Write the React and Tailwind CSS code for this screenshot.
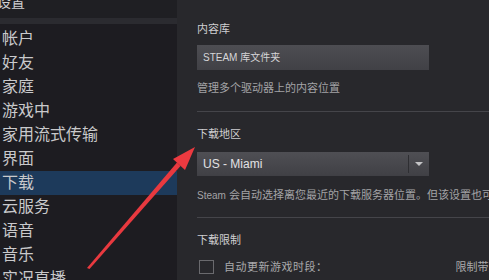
import React from "react";

const font = { fontFamily: '"Liberation Sans", "Noto Sans CJK SC", sans-serif' };

const menu = [
  "帐户",
  "好友",
  "家庭",
  "游戏中",
  "家用流式传输",
  "界面",
  "下载",
  "云服务",
  "语音",
  "音乐",
  "实况直播",
];

function Sidebar() {
  return (
    <div className="w-[177px] shrink-0 bg-[#1d1c21] border-t-[6px] border-[#2b2b30] pt-[3px]">
      {menu.map((item) => (
        <div
          key={item}
          className={
            "h-[24px] flex items-center pl-[2px] text-[16px] leading-none text-[#c9c9cb] " +
            (item === "下载" ? "bg-[#1d3a5b]" : "")
          }
        >
          {item}
        </div>
      ))}
    </div>
  );
}

function Divider() {
  return <div className="h-px bg-[#45454a] w-full" />;
}

function Content() {
  return (
    <div className="flex-1 bg-[#28282c] pl-[20px] -mt-[18px] flex flex-col text-[11px] leading-[16px]">
      <div className="mt-[21px] h-[16px] text-[#cfcfd1]">内容库</div>
      <div className="mt-[8px] w-[232px] h-[25px] bg-gradient-to-b from-[#4d4d52] to-[#414146] flex items-center pl-[6px] text-[10px] text-[#d6d6d8]">
        STEAM 库文件夹
      </div>
      <div className="mt-[10px] h-[16px] text-[#a3a3a6]">管理多个驱动器上的内容位置</div>
      <div className="mt-[15px]">
        <Divider />
      </div>
      <div className="mt-[14px] h-[16px] text-[#cfcfd1]">下载地区</div>
      <div className="mt-[10px] w-[232px] h-[24px] bg-gradient-to-b from-[#4f4f54] to-[#404045] flex items-center text-[12px] text-[#e2e2e4]">
        <div className="flex-1 pl-[6px]">US - Miami</div>
        <div className="w-px h-[18px] bg-[#2e2e32]" />
        <div className="w-[20px] flex items-center justify-center">
          <div className="w-0 h-0 border-l-[4px] border-r-[4px] border-t-[4px] border-l-transparent border-r-transparent border-t-[#c4c4c6]" />
        </div>
      </div>
      <div className="mt-[11px] h-[16px] whitespace-nowrap text-[#a3a3a6]">
        <span className="text-[10px]">Steam</span> 会自动选择离您最近的下载服务器位置。但该设置也可以
      </div>
      <div className="mt-[14px]">
        <Divider />
      </div>
      <div className="mt-[14px] h-[16px] text-[#cfcfd1]">下载限制</div>
      <div className="mt-[11px] h-[16px] flex items-center whitespace-nowrap">
        <div className="ml-[2px] w-[15px] h-[14px] border border-[#6a6a6e]" />
        <div className="ml-[10px] text-[#a8a8ab] tracking-[0.5px]">自动更新游戏时段：</div>
        <div className="ml-[128px] text-[#a8a8ab]">限制带宽</div>
      </div>
    </div>
  );
}

function Arrow() {
  return (
    <svg className="absolute left-0 top-0 pointer-events-none" width="489" height="280">
      <polygon points="87,268 89.5,269 180.5,166 177,162.5" fill="#e8393f" />
      <polygon points="195,147 185,170 173,159" fill="#ec3a40" />
    </svg>
  );
}

export default function App() {
  return (
    <div className="relative w-[489px] h-[280px] overflow-hidden bg-[#1f1f23] flex flex-col" style={font}>
      <div className="h-[18px] shrink-0 bg-[#1f1f23] relative z-10 w-[177px] overflow-hidden">
        <div className="-ml-[3px] -mt-[5px] text-[14px] leading-none text-[#d0d0d2]">设置</div>
      </div>
      <div className="flex flex-1 min-h-0">
        <Sidebar />
        <Content />
      </div>
      <Arrow />
    </div>
  );
}
